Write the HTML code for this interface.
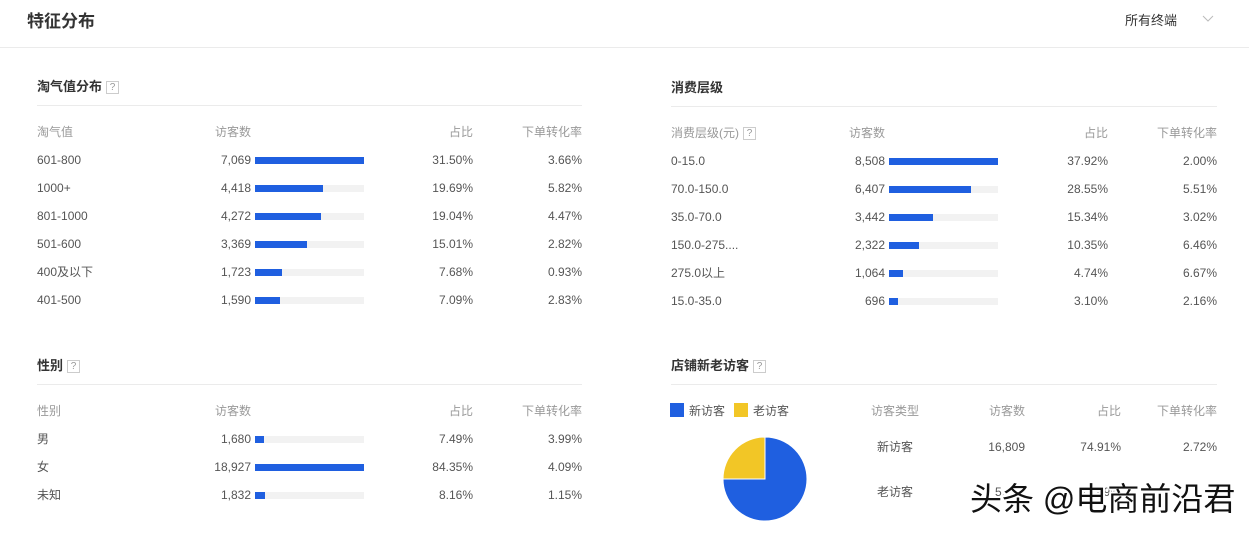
<!DOCTYPE html>
<html><head><meta charset="utf-8">
<style>
*{margin:0;padding:0;box-sizing:border-box}
body{width:1249px;height:533px;background:#fff;position:relative;overflow:hidden;font-family:"Liberation Sans","Noto Sans CJK SC",sans-serif;font-size:12px;color:#555}
.a{position:absolute;white-space:nowrap;line-height:16px}
.r{text-align:right}
.h{color:#999}
.t{font-size:13px;font-weight:bold;color:#333}
.q{display:inline-block;width:13px;height:13px;border:1px solid #ccc;color:#999;font-size:10px;line-height:11px;text-align:center;font-weight:normal;vertical-align:1px;margin-left:4px}
.ln{position:absolute;height:1px;background:#ebebeb}
.bg{position:absolute;height:7px;background:#f2f2f2;width:109px}
.bg i{display:block;height:7px;background:#1f5fe0}
</style></head><body>
<div class="a" style="left:27px;top:11px;font-size:17px;line-height:22px;color:#333;font-weight:bold">特征分布</div>
<div class="a" style="left:1125px;top:13px;color:#333;font-size:13px">所有终端</div>
<svg style="position:absolute;left:1202px;top:15px" width="12" height="8"><path d="M1 1 L6 6 L11 1" stroke="#bbb" fill="none"/></svg>
<div class="ln" style="left:0;top:47px;width:1249px"></div>

<div class="a t" style="left:37px;top:79px">淘气值分布<span class="q">?</span></div>
<div class="ln" style="left:37px;top:105px;width:545px"></div>
<div class="a h" style="left:37px;top:124px">淘气值</div>
<div class="a h" style="left:215px;top:124px">访客数</div>
<div class="a h r" style="left:400px;width:73px;top:124px">占比</div>
<div class="a h r" style="left:500px;width:82px;top:124px">下单转化率</div>

<div class="a" style="left:37px;top:152px">601-800</div><div class="a r" style="left:180px;width:71px;top:152px">7,069</div><div class="bg" style="left:255px;top:157px"><i style="width:109px"></i></div><div class="a r" style="left:400px;width:73px;top:152px">31.50%</div><div class="a r" style="left:500px;width:82px;top:152px">3.66%</div>
<div class="a" style="left:37px;top:180px">1000+</div><div class="a r" style="left:180px;width:71px;top:180px">4,418</div><div class="bg" style="left:255px;top:185px"><i style="width:68px"></i></div><div class="a r" style="left:400px;width:73px;top:180px">19.69%</div><div class="a r" style="left:500px;width:82px;top:180px">5.82%</div>
<div class="a" style="left:37px;top:208px">801-1000</div><div class="a r" style="left:180px;width:71px;top:208px">4,272</div><div class="bg" style="left:255px;top:213px"><i style="width:66px"></i></div><div class="a r" style="left:400px;width:73px;top:208px">19.04%</div><div class="a r" style="left:500px;width:82px;top:208px">4.47%</div>
<div class="a" style="left:37px;top:236px">501-600</div><div class="a r" style="left:180px;width:71px;top:236px">3,369</div><div class="bg" style="left:255px;top:241px"><i style="width:52px"></i></div><div class="a r" style="left:400px;width:73px;top:236px">15.01%</div><div class="a r" style="left:500px;width:82px;top:236px">2.82%</div>
<div class="a" style="left:37px;top:264px">400及以下</div><div class="a r" style="left:180px;width:71px;top:264px">1,723</div><div class="bg" style="left:255px;top:269px"><i style="width:27px"></i></div><div class="a r" style="left:400px;width:73px;top:264px">7.68%</div><div class="a r" style="left:500px;width:82px;top:264px">0.93%</div>
<div class="a" style="left:37px;top:292px">401-500</div><div class="a r" style="left:180px;width:71px;top:292px">1,590</div><div class="bg" style="left:255px;top:297px"><i style="width:25px"></i></div><div class="a r" style="left:400px;width:73px;top:292px">7.09%</div><div class="a r" style="left:500px;width:82px;top:292px">2.83%</div>

<div class="a t" style="left:671px;top:80px">消费层级</div>
<div class="ln" style="left:671px;top:106px;width:546px"></div>
<div class="a h" style="left:671px;top:125px">消费层级(元)<span class="q">?</span></div>
<div class="a h" style="left:849px;top:125px">访客数</div>
<div class="a h r" style="left:1030px;width:78px;top:125px">占比</div>
<div class="a h r" style="left:1130px;width:87px;top:125px">下单转化率</div>

<div class="a" style="left:671px;top:153px">0-15.0</div><div class="a r" style="left:814px;width:71px;top:153px">8,508</div><div class="bg" style="left:889px;top:158px"><i style="width:109px"></i></div><div class="a r" style="left:1030px;width:78px;top:153px">37.92%</div><div class="a r" style="left:1130px;width:87px;top:153px">2.00%</div>
<div class="a" style="left:671px;top:181px">70.0-150.0</div><div class="a r" style="left:814px;width:71px;top:181px">6,407</div><div class="bg" style="left:889px;top:186px"><i style="width:82px"></i></div><div class="a r" style="left:1030px;width:78px;top:181px">28.55%</div><div class="a r" style="left:1130px;width:87px;top:181px">5.51%</div>
<div class="a" style="left:671px;top:209px">35.0-70.0</div><div class="a r" style="left:814px;width:71px;top:209px">3,442</div><div class="bg" style="left:889px;top:214px"><i style="width:44px"></i></div><div class="a r" style="left:1030px;width:78px;top:209px">15.34%</div><div class="a r" style="left:1130px;width:87px;top:209px">3.02%</div>
<div class="a" style="left:671px;top:237px">150.0-275....</div><div class="a r" style="left:814px;width:71px;top:237px">2,322</div><div class="bg" style="left:889px;top:242px"><i style="width:30px"></i></div><div class="a r" style="left:1030px;width:78px;top:237px">10.35%</div><div class="a r" style="left:1130px;width:87px;top:237px">6.46%</div>
<div class="a" style="left:671px;top:265px">275.0以上</div><div class="a r" style="left:814px;width:71px;top:265px">1,064</div><div class="bg" style="left:889px;top:270px"><i style="width:14px"></i></div><div class="a r" style="left:1030px;width:78px;top:265px">4.74%</div><div class="a r" style="left:1130px;width:87px;top:265px">6.67%</div>
<div class="a" style="left:671px;top:293px">15.0-35.0</div><div class="a r" style="left:814px;width:71px;top:293px">696</div><div class="bg" style="left:889px;top:298px"><i style="width:9px"></i></div><div class="a r" style="left:1030px;width:78px;top:293px">3.10%</div><div class="a r" style="left:1130px;width:87px;top:293px">2.16%</div>

<div class="a t" style="left:37px;top:358px">性别<span class="q">?</span></div>
<div class="ln" style="left:37px;top:384px;width:545px"></div>
<div class="a h" style="left:37px;top:403px">性别</div>
<div class="a h" style="left:215px;top:403px">访客数</div>
<div class="a h r" style="left:400px;width:73px;top:403px">占比</div>
<div class="a h r" style="left:500px;width:82px;top:403px">下单转化率</div>
<div class="a" style="left:37px;top:431px">男</div><div class="a r" style="left:180px;width:71px;top:431px">1,680</div><div class="bg" style="left:255px;top:436px"><i style="width:9px"></i></div><div class="a r" style="left:400px;width:73px;top:431px">7.49%</div><div class="a r" style="left:500px;width:82px;top:431px">3.99%</div>
<div class="a" style="left:37px;top:459px">女</div><div class="a r" style="left:180px;width:71px;top:459px">18,927</div><div class="bg" style="left:255px;top:464px"><i style="width:109px"></i></div><div class="a r" style="left:400px;width:73px;top:459px">84.35%</div><div class="a r" style="left:500px;width:82px;top:459px">4.09%</div>
<div class="a" style="left:37px;top:487px">未知</div><div class="a r" style="left:180px;width:71px;top:487px">1,832</div><div class="bg" style="left:255px;top:492px"><i style="width:10px"></i></div><div class="a r" style="left:400px;width:73px;top:487px">8.16%</div><div class="a r" style="left:500px;width:82px;top:487px">1.15%</div>

<div class="a t" style="left:671px;top:358px">店铺新老访客<span class="q">?</span></div>
<div class="ln" style="left:671px;top:384px;width:546px"></div>
<div style="position:absolute;left:670px;top:403px;width:14px;height:14px;background:#1f5fe0"></div>
<div class="a" style="left:689px;top:403px">新访客</div>
<div style="position:absolute;left:734px;top:403px;width:14px;height:14px;background:#f2c626"></div>
<div class="a" style="left:753px;top:403px">老访客</div>
<svg style="position:absolute;left:720px;top:434px" width="90" height="90">
<path d="M45 45 L45 3 A42 42 0 1 1 3 45 Z" fill="#1f5fe0" stroke="#fff" stroke-width="1"/>
<path d="M45 45 L3 45 A42 42 0 0 1 45 3 Z" fill="#f2c626" stroke="#fff" stroke-width="1"/>
</svg>
<div class="a h" style="left:871px;top:403px">访客类型</div>
<div class="a h r" style="left:960px;width:65px;top:403px">访客数</div>
<div class="a h r" style="left:1050px;width:71px;top:403px">占比</div>
<div class="a h r" style="left:1130px;width:87px;top:403px">下单转化率</div>
<div class="a" style="left:877px;top:439px">新访客</div>
<div class="a r" style="left:960px;width:65px;top:439px">16,809</div>
<div class="a r" style="left:1050px;width:71px;top:439px">74.91%</div>
<div class="a r" style="left:1130px;width:87px;top:439px">2.72%</div>
<div class="a" style="left:877px;top:484px">老访客</div>
<div class="a r" style="left:960px;width:65px;top:484px">5,629</div>
<div class="a r" style="left:1050px;width:71px;top:484px">25.09%</div>
<div class="a" style="left:970px;top:480px;font-size:32px;line-height:38px;color:#111;text-shadow:1px 1px 0 #fff,-1px -1px 0 #fff,1px -1px 0 #fff,-1px 1px 0 #fff,2px 0 0 #fff,-2px 0 0 #fff,0 2px 0 #fff,0 -2px 0 #fff,2px 2px 0 #fff,-2px -2px 0 #fff">头条 @电商前沿君</div>
</body></html>
